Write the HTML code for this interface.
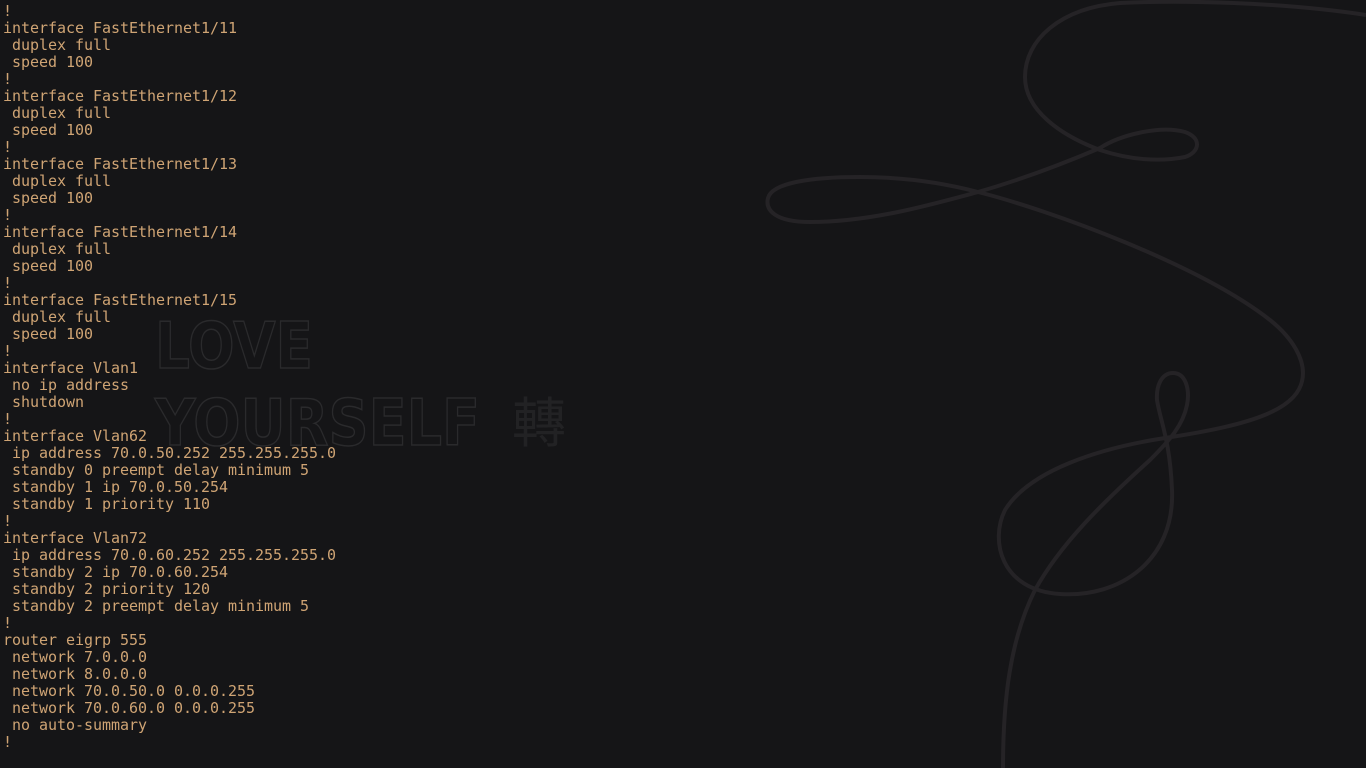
<!DOCTYPE html>
<html><head><meta charset="utf-8"><style>
html,body{margin:0;padding:0;background:#151517;width:1366px;height:768px;overflow:hidden}
pre{position:absolute;left:3px;top:3px;margin:0;font-family:"DejaVu Sans Mono","Liberation Mono",monospace;font-size:15px;line-height:17px;color:#cfa474;z-index:2;letter-spacing:-0.03px}
svg{position:absolute;left:0;top:0}
</style></head><body>
<svg width="1366" height="768">
<path d="M1366,15 C1280,2 1180,0 1120,3 C1060,8 1025,40 1025,77 C1025,110 1060,135 1100,150 C1130,160 1160,162 1185,157 C1200,152 1202,138 1185,132 C1160,125 1120,135 1100,148 C1060,165 1020,180 978,192 C930,205 870,222 810,222 C775,222 765,210 768,198 C772,183 810,177 860,177 C900,177 940,182 978,192 C1050,210 1200,265 1270,320 C1295,340 1303,360 1303,373 C1303,410 1250,425 1165,438 C1100,448 1030,470 1005,510 C990,540 1000,590 1060,594 C1120,598 1175,560 1172,490 C1170,440 1160,420 1157,400 C1156,385 1162,373 1173,373 C1186,373 1190,390 1187,405 C1183,425 1170,440 1150,460 C1100,505 1060,545 1035,590 C1010,640 1003,700 1003,768" fill="none" stroke="#252326" stroke-width="4"/>
<g fill="none" stroke="#2a2a2c" stroke-width="1.5" font-family="'DejaVu Sans','Liberation Sans',sans-serif" font-weight="bold">
<text x="155" y="368" font-size="64" textLength="158" lengthAdjust="spacingAndGlyphs">LOVE</text>
<text x="155" y="445" font-size="64" textLength="325" lengthAdjust="spacingAndGlyphs">YOURSELF</text>
</g>
<text x="512" y="442" font-size="54" fill="#222224" font-family="'Noto Sans CJK TC',sans-serif">轉</text>
</svg>
<pre>!
interface FastEthernet1/11
 duplex full
 speed 100
!
interface FastEthernet1/12
 duplex full
 speed 100
!
interface FastEthernet1/13
 duplex full
 speed 100
!
interface FastEthernet1/14
 duplex full
 speed 100
!
interface FastEthernet1/15
 duplex full
 speed 100
!
interface Vlan1
 no ip address
 shutdown
!
interface Vlan62
 ip address 70.0.50.252 255.255.255.0
 standby 0 preempt delay minimum 5
 standby 1 ip 70.0.50.254
 standby 1 priority 110
!
interface Vlan72
 ip address 70.0.60.252 255.255.255.0
 standby 2 ip 70.0.60.254
 standby 2 priority 120
 standby 2 preempt delay minimum 5
!
router eigrp 555
 network 7.0.0.0
 network 8.0.0.0
 network 70.0.50.0 0.0.0.255
 network 70.0.60.0 0.0.0.255
 no auto-summary
!</pre>
</body></html>
